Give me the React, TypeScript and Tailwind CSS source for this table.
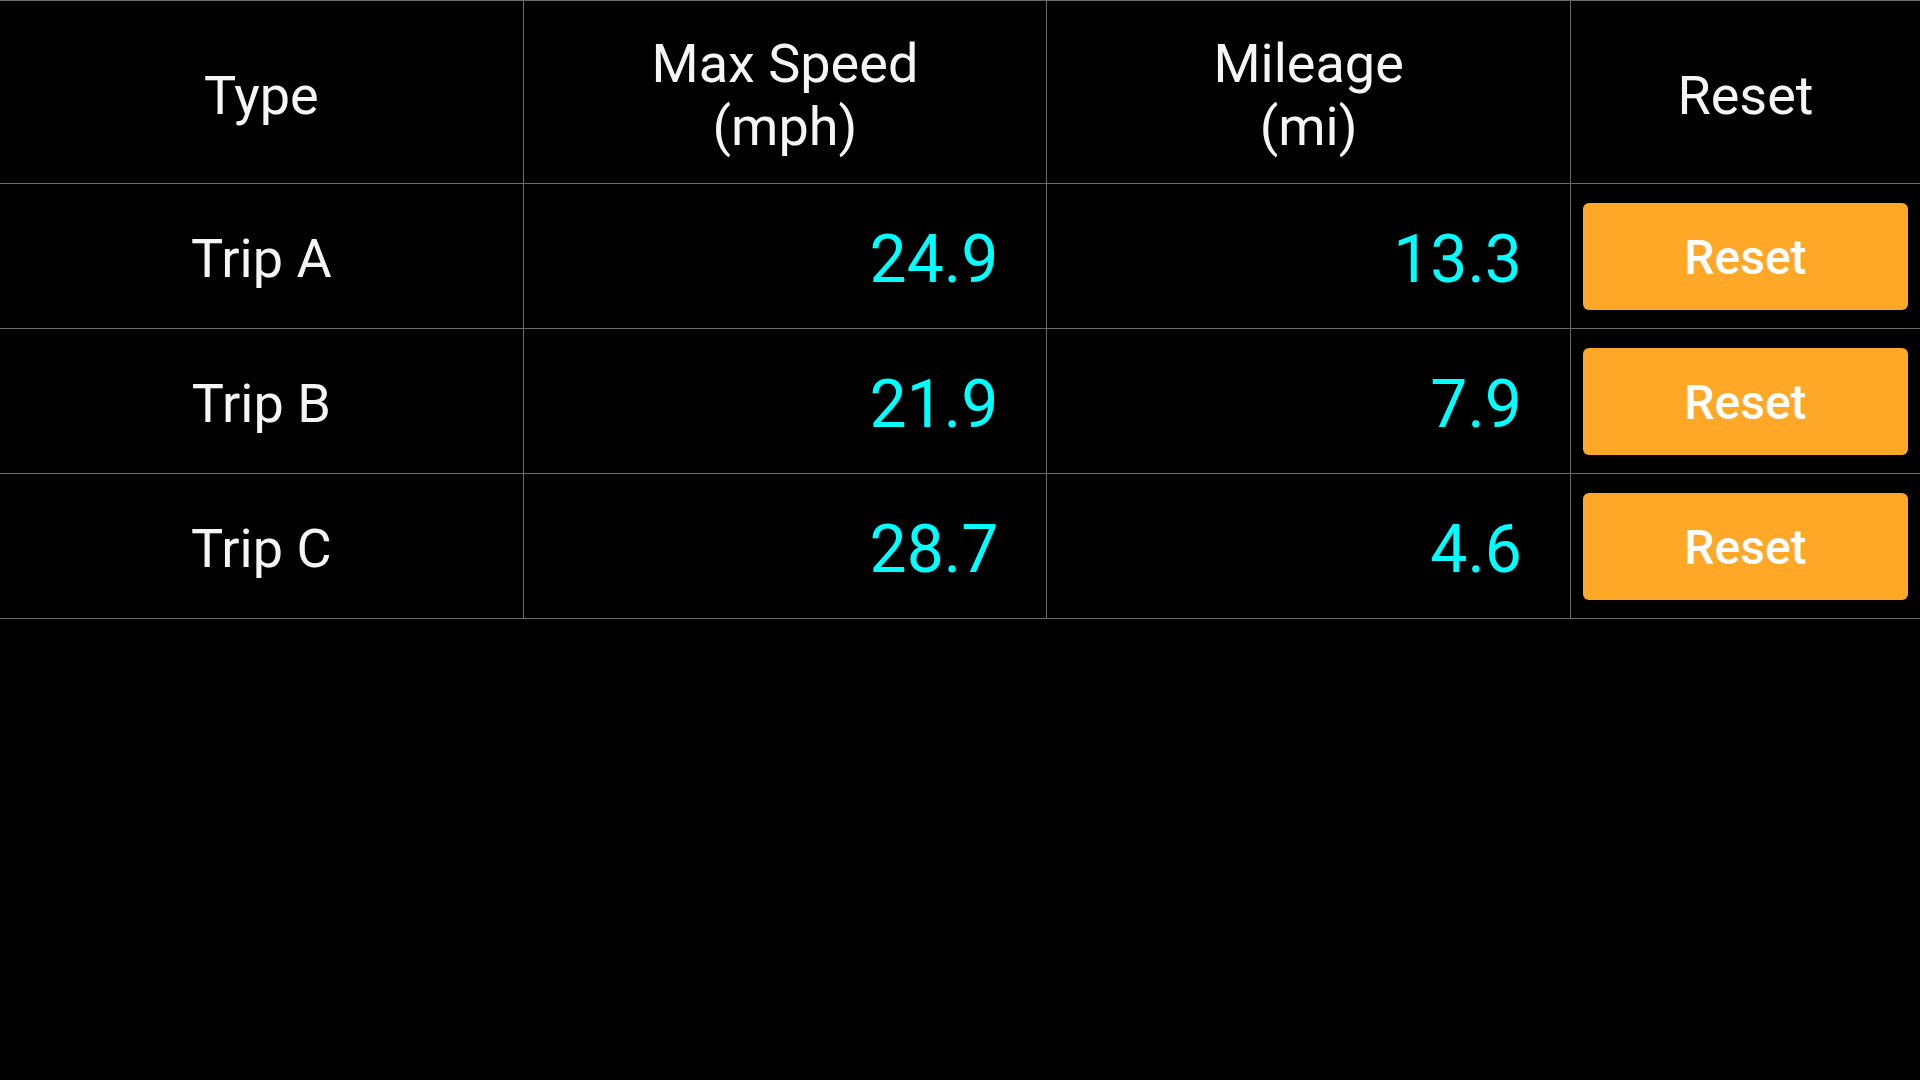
import React from "react";

const rows = [
  { type: "Trip A", speed: "24.9", miles: "13.3" },
  { type: "Trip B", speed: "21.9", miles: "7.9" },
  { type: "Trip C", speed: "28.7", miles: "4.6" },
];

export default function App() {
  return (
    <div
      className="w-full h-screen bg-black text-[#f5f5f5]"
      style={{ fontFamily: "Roboto, 'Noto Sans', sans-serif" }}
    >
      <div className="grid grid-cols-[3fr_3fr_3fr_2fr] h-[184px] border-t border-b border-[#6b6b6b] text-[54px] leading-[63px]">
        <div className="flex items-center justify-center pt-[6px] border-r border-[#6b6b6b]">Type</div>
        <div className="flex items-center justify-center pt-[6px] text-center border-r border-[#6b6b6b]">
          Max Speed
          <br />
          (mph)
        </div>
        <div className="flex items-center justify-center pt-[6px] text-center border-r border-[#6b6b6b]">
          Mileage
          <br />
          (mi)
        </div>
        <div className="flex items-center justify-center pt-[6px]">Reset</div>
      </div>
      {rows.map((r) => (
        <div
          key={r.type}
          className="grid grid-cols-[3fr_3fr_3fr_2fr] h-[145px] border-b border-[#6b6b6b]"
        >
          <div className="flex items-center justify-center pt-[5px] border-r border-[#6b6b6b] text-[54px]">
            {r.type}
          </div>
          <div className="flex items-center justify-end pt-[6px] pr-[48px] border-r border-[#6b6b6b] text-[66px] text-[#00ffff]">
            {r.speed}
          </div>
          <div className="flex items-center justify-end pt-[6px] pr-[48px] border-r border-[#6b6b6b] text-[66px] text-[#00ffff]">
            {r.miles}
          </div>
          <div className="flex items-center px-3">
            <button className="w-full h-[107px] pt-[4px] rounded-[6px] bg-[#ffa726] text-white text-[48px] font-medium">
              Reset
            </button>
          </div>
        </div>
      ))}
    </div>
  );
}
